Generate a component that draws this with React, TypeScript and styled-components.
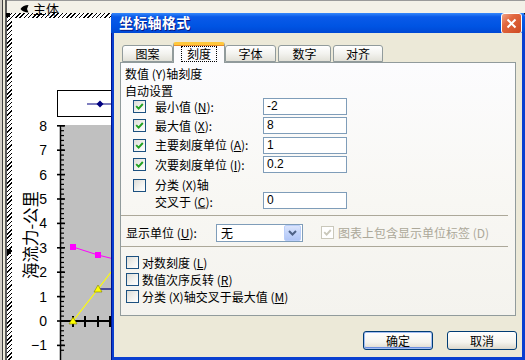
import React from "react";
import styled, { createGlobalStyle } from "styled-components";

const CJK = `"Noto Sans CJK SC", "Liberation Sans", sans-serif`;

const GlobalStyle = createGlobalStyle`
  html, body { margin: 0; padding: 0; }
  body {
    width: 525px;
    height: 360px;
    overflow: hidden;
    background: #ffffff;
    font-family: ${CJK};
  }
`;

const Screen = styled.div`
  position: relative;
  width: 525px;
  height: 360px;
  overflow: hidden;
  display: flex;
  background: #ffffff;
`;

const FrameStrip = styled.div`
  width: 3px;
  flex: none;
  background: #ece9d8;
  border-left: 2px solid #d4d0c8;
  border-right: 2px solid #5a5a5a;
  box-shadow: inset 1px 0 0 #404040;
`;

const Sheet = styled.div`
  flex: 1;
  display: flex;
  flex-direction: column;
`;

const TopBar = styled.div`
  height: 13px;
  flex: none;
  display: flex;
  align-items: flex-end;
  gap: 4px;
  padding-left: 13px;
  background: #f3f1e8;
  border-top: 1px solid #9a9a9a;
  box-sizing: border-box;
  font-size: 13px;
  line-height: 13px;
  color: #000;
  overflow: visible;
  position: relative;
  z-index: 1;
`;

const BarLabel = styled.span`
  transform: translateY(2px);
`;

const ChartFrame = styled.div`
  flex: 1;
  padding: 5px 0 0 5px;
  background: repeating-linear-gradient(135deg, #000 0 1px, #fff 1px 3px);
`;

const ChartCanvas = styled.div`
  width: 100%;
  height: 100%;
  background: #ffffff;
  svg { display: block; }
`;

const Dialog = styled.div`
  position: absolute;
  left: 111px;
  top: 10px;
  width: 414px;
  height: 350px;
  display: flex;
  flex-direction: column;
  background: #0a3fd0;
  border-radius: 7px 7px 0 0;
  overflow: hidden;
  box-shadow: inset 1px 0 0 #00138c;
`;

const TitleBar = styled.div`
  height: 23px;
  flex: none;
  display: flex;
  align-items: center;
  justify-content: space-between;
  padding: 0 3px 0 8px;
  background: linear-gradient(
    to bottom,
    #0a5fe4 0%,
    #3d90ff 10%,
    #0a5ae8 30%,
    #0054e3 70%,
    #0048d4 100%
  );
`;

const Title = styled.span`
  color: #ffffff;
  font-size: 14px;
  font-weight: 700;
  letter-spacing: 0.3px;
  text-shadow: 1px 1px 0 #0a1883;
`;

const CloseButton = styled.div`
  width: 19px;
  height: 19px;
  margin-top: 3px;
  border: 1px solid #ffffff;
  border-radius: 3px;
  display: flex;
  align-items: center;
  justify-content: center;
  background: linear-gradient(135deg, #f0a58a 0%, #e2673f 35%, #cd4a22 100%);
`;

const Body = styled.div`
  flex: 1;
  margin: 0 3px 3px;
  background: #ece9d8;
  padding: 9px 6px 0;
  display: flex;
  flex-direction: column;
`;

const TabRow = styled.div`
  height: 20px;
  display: flex;
  align-items: flex-end;
  gap: 2px;
  padding-left: 2px;
  position: relative;
  z-index: 2;
`;

const Tab = styled.div<{ $w: number; $active?: boolean }>`
  width: ${(p) => p.$w}px;
  box-sizing: border-box;
  height: ${(p) => (p.$active ? 21 : 17)}px;
  margin: ${(p) => (p.$active ? "0 -2px -1px" : "0")};
  padding: 0 ${(p) => (p.$active ? 2 : 0)}px;
  display: flex;
  align-items: center;
  justify-content: center;
  font-size: 12px;
  color: #000;
  border: 1px solid #919b9c;
  border-bottom: ${(p) => (p.$active ? "none" : "1px solid #919b9c")};
  border-top: ${(p) => (p.$active ? "3px solid #ffc83c" : "1px solid #919b9c")};
  border-radius: 3px 3px 0 0;
  background: ${(p) =>
    p.$active
      ? "#fcfcfe"
      : "linear-gradient(to bottom, #ffffff 0%, #f3f3ef 50%, #e2e1d8 100%)"};
  box-shadow: ${(p) => (p.$active ? "inset 0 1px 0 #e68b2c" : "none")};
`;

const FocusText = styled.span`
  outline: 1px dotted #000;
  outline-offset: 0;
  padding: 0 5px;
  line-height: 14px;
`;

const Panel = styled.div`
  height: 254px;
  box-sizing: border-box;
  border: 1px solid #919b9c;
  background: linear-gradient(to bottom, #fcfcfe 0%, #f8f7f3 55%, #f4f3ee 100%);
  padding: 2px 0 0 0;
  display: flex;
  flex-direction: column;
  font-size: 12px;
  color: #000;
`;

const Heading = styled.div`
  line-height: 17px;
  height: 17px;
  padding-left: 4px;
`;

const AutoGroup = styled.div`
  display: flex;
  flex-direction: column;
  gap: 2.4px;
  padding-left: 12px;
  margin-top: -1px;
`;

const FieldRow = styled.div<{ $h?: number; $shift?: number }>`
  display: grid;
  grid-template-columns: 22px 108px 84px;
  align-items: center;
  height: ${(p) => p.$h ?? 17}px;
  margin-top: ${(p) => p.$shift ?? 0}px;
`;

const FieldLabel = styled.span<{ $nudge?: number }>`
  grid-column: 2;
  white-space: nowrap;
  line-height: 14px;
  transform: translateY(${(p) => p.$nudge ?? 0}px);
`;

const TextBox = styled.div`
  grid-column: 3;
  height: 17px;
  box-sizing: border-box;
  border: 1px solid #7f9db9;
  background: #ffffff;
  padding-left: 3px;
  font-family: "Liberation Sans", sans-serif;
  font-size: 12px;
  line-height: 15px;
`;

const Key = styled.u`
  text-underline-offset: 1px;
`;

const Separator = styled.div<{ $top: number }>`
  height: 0;
  margin: ${(p) => p.$top}px 7px 0 0;
  border-top: 1px solid #aca899;
`;

const UnitRow = styled.div`
  display: flex;
  align-items: center;
  height: 18px;
  margin-top: 8px;
  padding-left: 5px;
`;

const UnitLabel = styled.span`
  width: 90px;
  flex: none;
  white-space: nowrap;
`;

const Select = styled.div`
  width: 87px;
  height: 18px;
  box-sizing: border-box;
  flex: none;
  border: 1px solid #7f9db9;
  background: #ffffff;
  display: flex;
  align-items: center;
  justify-content: space-between;
  padding: 0 1px 0 4px;
`;

const SelectButton = styled.div`
  width: 15px;
  height: 14px;
  border: 1px solid #bacef9;
  border-radius: 2px;
  background: linear-gradient(to bottom, #dbe5fc 0%, #c2d3fa 50%, #b1c6f6 100%);
  display: flex;
  align-items: center;
  justify-content: center;
`;

const InlineCheck = styled.label<{ $disabled?: boolean; $gap: number }>`
  display: flex;
  align-items: center;
  gap: ${(p) => p.$gap}px;
  color: ${(p) => (p.$disabled ? "#aca899" : "#000")};
  white-space: nowrap;
  line-height: 17px;
  height: 17px;
`;

const UnitCheck = styled.div`
  margin-left: 18px;
`;

const OptionList = styled.div`
  display: flex;
  flex-direction: column;
  margin-top: 7px;
  padding-left: 5px;
`;

const Box = styled.span<{ $disabled?: boolean }>`
  width: 13px;
  height: 13px;
  box-sizing: border-box;
  flex: none;
  border: 1px solid ${(p) => (p.$disabled ? "#cac8bb" : "#1c5180")};
  background: ${(p) =>
    p.$disabled
      ? "#ffffff"
      : "linear-gradient(135deg, #dcdcd7 0%, #f4f4f1 60%, #ffffff 100%)"};
  display: flex;
  align-items: center;
  justify-content: center;
`;

const Footer = styled.div`
  display: flex;
  justify-content: flex-end;
  gap: 14px;
  margin: 15px -1px 0 0;
`;

const Button = styled.div<{ $default?: boolean }>`
  width: 70px;
  height: 19px;
  box-sizing: border-box;
  border: 1px solid #003c74;
  border-radius: 3px;
  display: flex;
  align-items: center;
  justify-content: center;
  font-size: 12px;
  color: #000;
  background: linear-gradient(to bottom, #ffffff 0%, #f5f4ee 60%, #dcd8cc 100%);
  box-shadow: ${(p) =>
    p.$default ? "inset 0 0 0 1px #a4bef2, inset 0 -1px 0 1px #6d8fe0" : "none"};
`;

const Handle = styled.div`
  position: absolute;
  left: 7px;
  top: 249px;
  width: 4px;
  height: 5px;
  background: #000;
`;

const CornerHandle = styled.div`
  position: absolute;
  left: 6px;
  top: 13px;
  width: 4px;
  height: 4px;
  background: #000;
`;

const Check = ({ checked, disabled }: { checked?: boolean; disabled?: boolean }) => (
  <Box $disabled={disabled}>
    {checked && (
      <svg width="9" height="9" viewBox="0 0 9 9">
        <path
          d="M1.2 4.2 L3.6 6.6 L7.8 2"
          fill="none"
          stroke={disabled ? "#cac8bb" : "#21a121"}
          strokeWidth="1.9"
        />
      </svg>
    )}
  </Box>
);

const fields = [
  { label: "最小值", key: "N", value: "-2" },
  { label: "最大值", key: "X", value: "8" },
  { label: "主要刻度单位", key: "A", value: "1" },
  { label: "次要刻度单位", key: "I", value: "0.2" },
];

const options = [
  { label: "对数刻度", key: "L" },
  { label: "数值次序反转", key: "R" },
  { label: "分类 (X)轴交叉于最大值", key: "M" },
];

const tabs = [
  { label: "图案", w: 51 },
  { label: "刻度", w: 52, active: true },
  { label: "字体", w: 51 },
  { label: "数字", w: 53 },
  { label: "对齐", w: 50 },
];

const yOf = (v: number) => 321 - v * 24.4;

function Chart() {
  const labels = [8, 7, 6, 5, 4, 3, 2, 1, 0, -1];
  const minor: number[] = [];
  for (let i = -6; i <= 40; i++) minor.push(i / 5);
  return (
    <svg width="513" height="342" viewBox="12 18 513 342">
      {/* legend */}
      <rect x="57.5" y="90.5" width="80" height="26" fill="#fff" stroke="#000" />
      <line x1="87" y1="104" x2="130" y2="104" stroke="#000080" strokeWidth="1.2" />
      <path d="M100 100.5 L103.5 104 L100 107.5 L96.5 104 Z" fill="#000080" />

      {/* plot area */}
      <rect x="60" y="125" width="70" height="240" fill="#c0c0c0" />
      <path d="M60 125 L64 125 L60 129 Z" fill="#fff" />

      {/* y axis */}
      <line x1="60.5" y1="125" x2="60.5" y2="362" stroke="#000" strokeWidth="1.5" />
      {minor.map((v) => (
        <line key={"m" + v} x1="60" y1={yOf(v)} x2="64" y2={yOf(v)} stroke="#000" strokeWidth="1.2" />
      ))}
      {labels.map((v) => (
        <line key={"M" + v} x1="57" y1={yOf(v)} x2="65" y2={yOf(v)} stroke="#000" strokeWidth="1.6" />
      ))}
      {labels.map((v) => (
        <text
          key={"t" + v}
          x="47"
          y={yOf(v) + 5}
          textAnchor="end"
          fontFamily='"Liberation Sans", sans-serif'
          fontSize="14"
          fill="#000"
        >
          {v === -1 ? "\u22121" : v}
        </text>
      ))}

      {/* axis title */}
      <text
        x="30"
        y="235"
        transform="rotate(-90 30 235)"
        textAnchor="middle"
        dominantBaseline="central"
        fontFamily={CJK}
        fontSize="16.5"
        fill="#000"
      >
        海流力-公里
      </text>

      {/* x axis */}
      <line x1="60" y1="321" x2="130" y2="321" stroke="#000" strokeWidth="2" />
      {[73, 85, 98, 110, 122].map((x) => (
        <line key={"x" + x} x1={x} y1="316" x2={x} y2="327" stroke="#000" strokeWidth="2" />
      ))}

      {/* series */}
      <polyline points="73,247 98,255 130,263" fill="none" stroke="#ff00ff" strokeWidth="1" />
      <rect x="70" y="244" width="6" height="6" fill="#ff00ff" />
      <rect x="95" y="252" width="6" height="6" fill="#ff00ff" />
      <polyline points="98,289 130,289" fill="none" stroke="#000080" strokeWidth="1.2" />
      <polyline points="73,321 98,289 115,267" fill="none" stroke="#ffff00" strokeWidth="1.2" />
      <path d="M73 317 L77 324 L69 324 Z" fill="#ffff00" stroke="#808000" strokeWidth="0.6" />
      <path d="M98 285 L102 292 L94 292 Z" fill="#ffff00" stroke="#808000" strokeWidth="0.6" />
    </svg>
  );
}

export default function App() {
  return (
    <>
      <GlobalStyle />
      <Screen>
        <FrameStrip />
        <Sheet>
          <TopBar>
            <svg width="9" height="9" viewBox="0 0 9 9">
              <path d="M0.5 5 C2 2.5 5 1 8.5 1 L7 5 L8.5 8.5 C5 8.5 2 7 0.5 5 Z" fill="#000" />
            </svg>
            <BarLabel>主体</BarLabel>
          </TopBar>
          <ChartFrame>
            <ChartCanvas>
              <Chart />
            </ChartCanvas>
          </ChartFrame>
        </Sheet>
        <CornerHandle />
        <Handle />

        <Dialog>
          <TitleBar>
            <Title>坐标轴格式</Title>
            <CloseButton>
              <svg width="11" height="11" viewBox="0 0 11 11">
                <path d="M1.5 1.5 L9.5 9.5 M9.5 1.5 L1.5 9.5" stroke="#fff" strokeWidth="2" />
              </svg>
            </CloseButton>
          </TitleBar>
          <Body>
            <TabRow>
              {tabs.map((t) => (
                <Tab key={t.label} $w={t.w} $active={t.active}>
                  {t.active ? <FocusText>{t.label}</FocusText> : t.label}
                </Tab>
              ))}
            </TabRow>
            <Panel>
              <Heading>数值 (Y)轴刻度</Heading>
              <Heading>自动设置</Heading>
              <AutoGroup>
                {fields.map((f) => (
                  <FieldRow key={f.key}>
                    <Check checked />
                    <FieldLabel>
                      {f.label} (<Key>{f.key}</Key>):
                    </FieldLabel>
                    <TextBox>{f.value}</TextBox>
                  </FieldRow>
                ))}
                <FieldRow $h={13} $shift={3}>
                  <Check />
                  <FieldLabel $nudge={-1.5}>分类 (X)轴</FieldLabel>
                </FieldRow>
                <FieldRow $shift={-2}>
                  <FieldLabel $nudge={1.5}>
                    交叉于 (<Key>C</Key>):
                  </FieldLabel>
                  <TextBox>0</TextBox>
                </FieldRow>
              </AutoGroup>
              <Separator $top={6} />
              <UnitRow>
                <UnitLabel>
                  显示单位 (<Key>U</Key>):
                </UnitLabel>
                <Select>
                  <span>无</span>
                  <SelectButton>
                    <svg width="9" height="6" viewBox="0 0 9 6">
                      <path d="M1 1 L4.5 4.5 L8 1" fill="none" stroke="#4d6185" strokeWidth="2" />
                    </svg>
                  </SelectButton>
                </Select>
                <UnitCheck>
                  <InlineCheck $disabled $gap={4}>
                    <Check checked disabled />
                    图表上包含显示单位标签 (D)
                  </InlineCheck>
                </UnitCheck>
              </UnitRow>
              <Separator $top={4} />
              <OptionList>
                {options.map((o) => (
                  <InlineCheck key={o.key} $gap={3}>
                    <Check />
                    <span>
                      {o.label} (<Key>{o.key}</Key>)
                    </span>
                  </InlineCheck>
                ))}
              </OptionList>
            </Panel>
            <Footer>
              <Button $default>确定</Button>
              <Button>取消</Button>
            </Footer>
          </Body>
        </Dialog>
      </Screen>
    </>
  );
}
